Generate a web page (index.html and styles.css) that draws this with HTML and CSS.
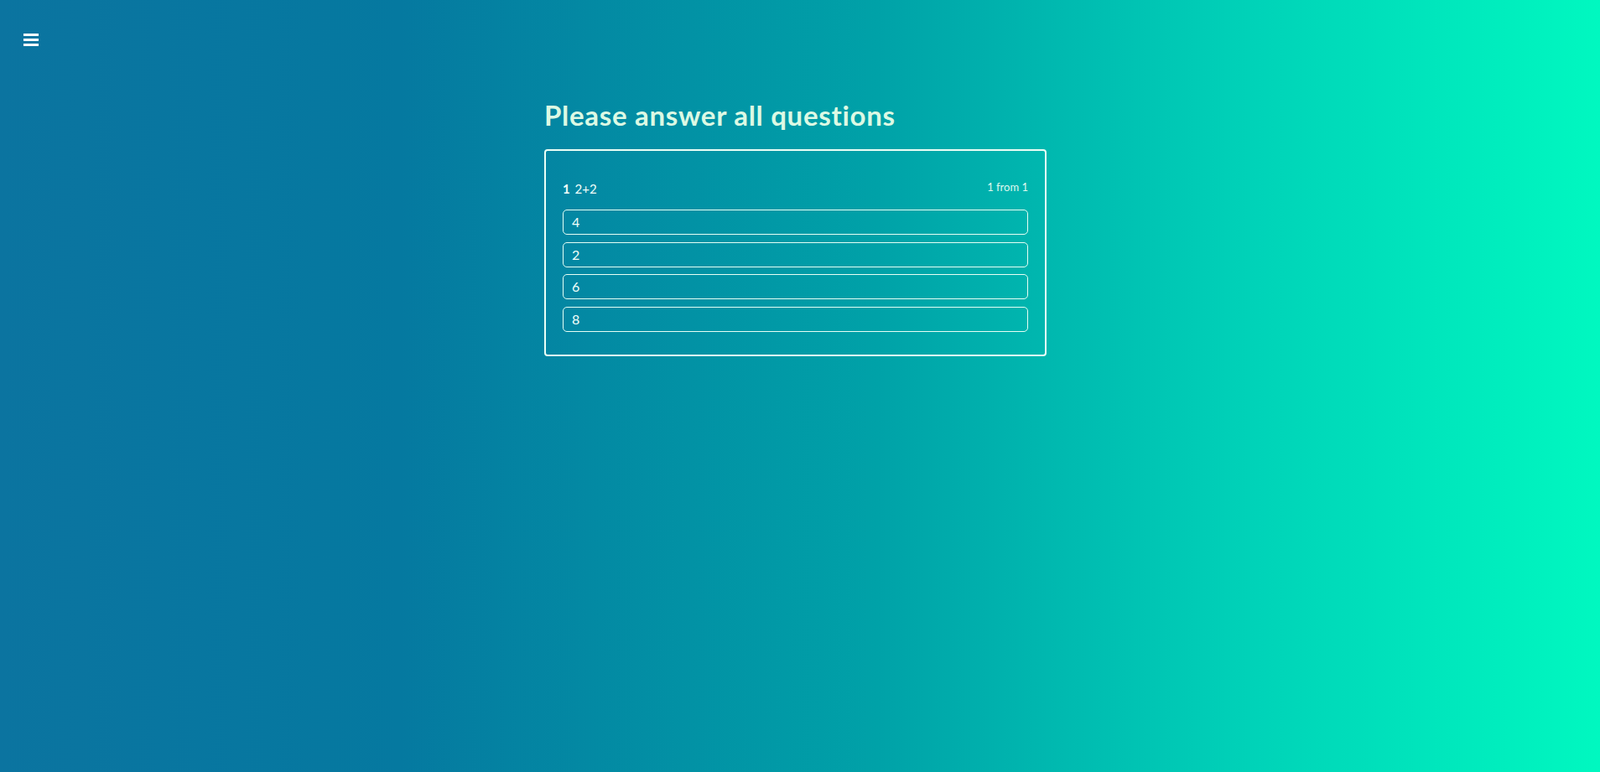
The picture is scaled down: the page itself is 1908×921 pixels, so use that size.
FILE: index.html
```html
<!DOCTYPE html>
<html lang="en">
<head>
<meta charset="utf-8">
<title>Quiz</title>
<link rel="stylesheet" href="styles.css">
</head>
<body>
<header class="topbar">
  <button class="menu-btn" aria-label="Menu">
    <svg width="18" height="15" viewBox="0 0 18 15"><rect x="0" y="0" width="18" height="3" fill="currentColor"/><rect x="0" y="6" width="18" height="3" fill="currentColor"/><rect x="0" y="12" width="18" height="3" fill="currentColor"/></svg>
  </button>
</header>
<main class="page">
  <h1 class="title">Please answer all questions</h1>
  <section class="card">
    <div class="question-head">
      <span class="q-text"><b class="q-num">1</b> 2+2</span>
      <span class="q-count">1 from 1</span>
    </div>
    <ul class="options">
      <li class="option">4</li>
      <li class="option">2</li>
      <li class="option">6</li>
      <li class="option">8</li>
    </ul>
  </section>
</main>
</body>
</html>
```
FILE: styles.css
```css
html, body {
  margin: 0;
  height: 100%;
}
body {
  font-family: Lato, "Noto Sans", sans-serif;
  color: #f2fffa;
  background: linear-gradient(90deg, #0b74a0 0%, #0579a0 25%, #00a2a8 55%, #00d2b8 78%, #00f8c0 100%);
  min-height: 921px;
}
.topbar {
  padding: 40px 0 0 28px;
  height: 15px;
}
.menu-btn {
  display: block;
  padding: 0;
  border: 0;
  background: none;
  color: #ffffff;
  line-height: 0;
  cursor: pointer;
}
.page {
  width: 610px;
  margin: 0 auto;
}
.title {
  margin: 62px 0 0;
  font-size: 33px;
  letter-spacing: 0.7px;
  line-height: 41px;
  font-weight: 700;
  color: #dcf9e4;
}
.card {
  margin-top: 20px;
  width: 555px;
  border: 2px solid #eafff6;
  border-radius: 4px;
  padding: 34px 20px 27px;
}
.question-head {
  display: flex;
  justify-content: space-between;
  align-items: baseline;
  margin-bottom: 14px;
}
.q-text {
  font-size: 15px;
  line-height: 22px;
}
.q-num {
  font-weight: 700;
  margin-right: 2px;
}
.q-count {
  font-size: 13px;
  line-height: 18px;
  color: #dff8ee;
  position: relative;
  top: -3px;
}
.options {
  list-style: none;
  margin: 0;
  padding: 0;
  display: flex;
  flex-direction: column;
  gap: 8.5px;
}
.option {
  height: 28px;
  border: 1px solid #e6fff5;
  border-radius: 5px;
  padding: 0 10px;
  font-size: 16px;
  line-height: 28px;
}
```
